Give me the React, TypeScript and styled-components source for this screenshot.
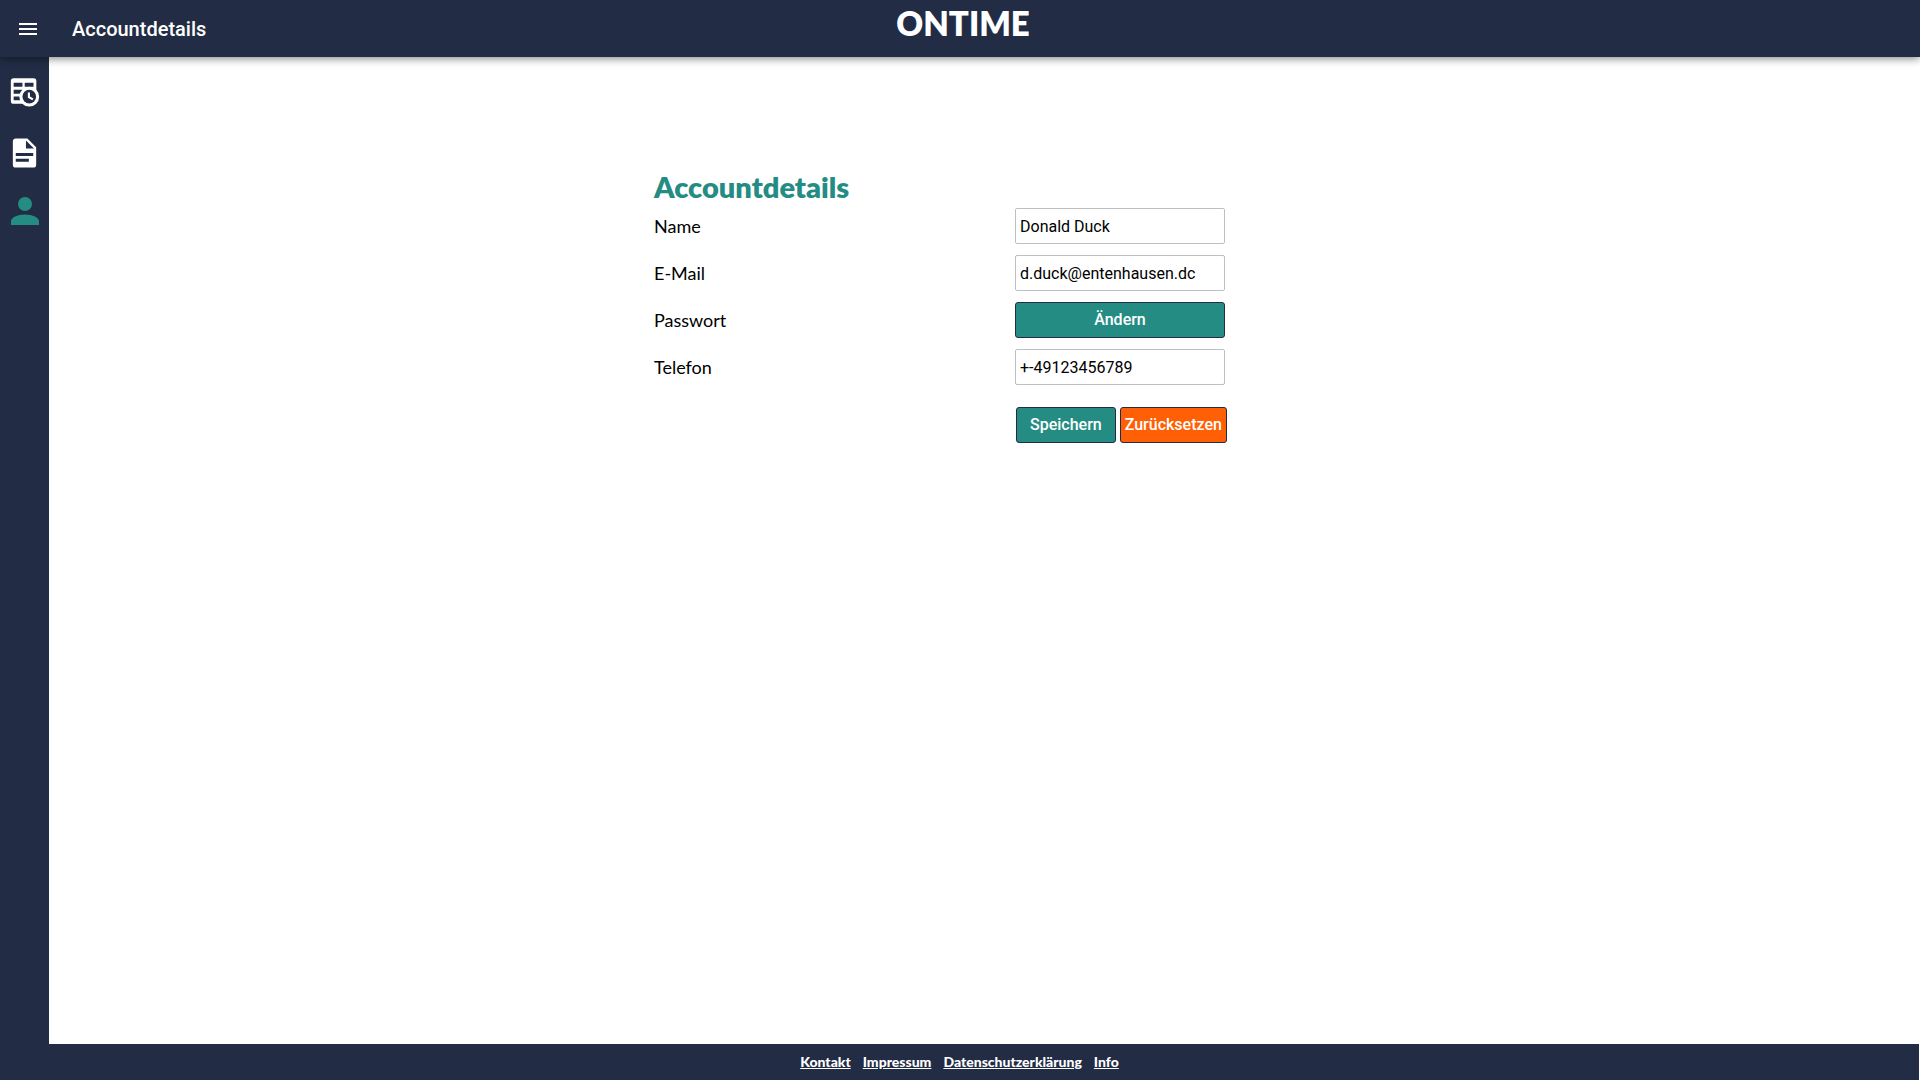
import React from "react";
import styled, { createGlobalStyle } from "styled-components";

const navy = "#222c45";
const teal = "#248c83";
const orange = "#ff5f05";

const GlobalStyle = createGlobalStyle`
  *, *::before, *::after { box-sizing: border-box; }
  body {
    margin: 0;
    background: #ffffff;
    color: #000000;
    font-family: Lato, "Liberation Sans", sans-serif;
  }
`;

const Page = styled.div`
  display: flex;
  flex-direction: column;
  min-height: 100vh;
`;

const TopBar = styled.header`
  position: relative;
  z-index: 1;
  display: grid;
  grid-template-columns: 1fr auto 1fr;
  height: 57px;
  padding: 0 10px 0 16px;
  background: ${navy};
  color: #ffffff;
  box-shadow: 0 2px 8px rgba(0, 0, 0, 0.45);
`;

const TopBarStart = styled.div`
  display: flex;
  align-items: center;
  gap: 32px;
`;

const MenuButton = styled.button`
  display: flex;
  padding: 0;
  border: 0;
  background: none;
  color: inherit;
  cursor: pointer;
`;

const PageTitle = styled.span`
  font: 500 20px/32px Roboto, sans-serif;
`;

const Brand = styled.span`
  font-size: 33px;
  font-weight: 800;
  line-height: 46px;
`;

const Body = styled.div`
  display: flex;
  flex: 1;
`;

const SideNav = styled.nav`
  display: flex;
  flex-direction: column;
  align-items: center;
  gap: 24px;
  width: 49px;
  padding-top: 16px;
  background: ${navy};
`;

const NavLink = styled.a<{ $active?: boolean }>`
  display: flex;
  align-items: center;
  justify-content: center;
  height: 36px;
  color: ${(p) => (p.$active ? teal : "#ffffff")};
`;

const Main = styled.main`
  display: flex;
  flex: 1;
  justify-content: center;
  padding: 112px 90px 32px 0;
`;

const AccountForm = styled.form`
  width: 571px;
`;

const Heading = styled.h1`
  margin: 0 0 3px;
  color: ${teal};
  font-size: 29px;
  font-weight: 800;
  line-height: 36px;
`;

const Fields = styled.div`
  display: flex;
  flex-direction: column;
  gap: 11px;
`;

const Field = styled.div`
  display: grid;
  grid-template-columns: 1fr 210px;
  align-items: center;
`;

const Label = styled.label`
  font-size: 18px;
  line-height: 24px;
`;

const TextInput = styled.input`
  width: 100%;
  height: 36px;
  padding: 0 4px;
  border: 1px solid #bfbfbf;
  border-radius: 2px;
  background: #ffffff;
  color: #000000;
  font: 400 16px/24px Roboto, sans-serif;
`;

const Button = styled.button<{ $danger?: boolean }>`
  height: 36px;
  padding: 0 4px;
  border: 1px solid ${navy};
  border-radius: 3px;
  background: ${(p) => (p.$danger ? orange : teal)};
  color: #ffffff;
  font: 500 16px/24px Roboto, sans-serif;
  cursor: pointer;
`;

const SaveButton = styled(Button)`
  padding: 0 13px;
`;

const Actions = styled.div`
  display: flex;
  gap: 4px;
  margin: 22px 0 0 362px;
`;

const Footer = styled.footer`
  display: flex;
  align-items: center;
  justify-content: center;
  gap: 12px;
  height: 36px;
  margin-right: 1px;
  background: ${navy};
`;

const FooterLink = styled.a`
  color: #ffffff;
  font-size: 14px;
  font-weight: 900;
  line-height: 20px;
  text-decoration: underline;
`;

interface IconProps {
  size: number;
  viewBox?: string;
  children: React.ReactNode;
}

function Icon({ size, viewBox = "0 0 24 24", children }: IconProps) {
  return (
    <svg width={size} height={size} viewBox={viewBox} fill="currentColor" aria-hidden="true">
      {children}
    </svg>
  );
}

function TableClockIcon() {
  return (
    <Icon size={34} viewBox="1 0 24 24">
      <rect x="3" y="3" width="18" height="18" rx="2" />
      <path
        fill={navy}
        d="M5 6.2h6.2V9H5zM12.8 6.2H19V9h-6.2zM5 11.1h6.2V14H5zM5 15.9h6.2v2.6H5z"
      />
      <circle cx="16" cy="16" r="7" />
      <circle cx="16" cy="16" r="4.8" fill={navy} />
      <path d="M15 13h1.5v2.82l2.44 1.41-.75 1.3L15 16.69z" />
    </Icon>
  );
}

const footerLinks = ["Kontakt", "Impressum", "Datenschutzerklärung", "Info"];

export default function App() {
  return (
    <Page>
      <GlobalStyle />
      <TopBar>
        <TopBarStart>
          <MenuButton type="button" aria-label="Menü">
            <Icon size={24}>
              <path d="M3 18h18v-2H3v2zm0-5h18v-2H3v2zm0-7v2h18V6H3z" />
            </Icon>
          </MenuButton>
          <PageTitle>Accountdetails</PageTitle>
        </TopBarStart>
        <Brand>ONTIME</Brand>
      </TopBar>
      <Body>
        <SideNav>
          <NavLink href="#zeiten" aria-label="Zeiten">
            <TableClockIcon />
          </NavLink>
          <NavLink href="#berichte" aria-label="Berichte">
            <Icon size={35} viewBox="0 -1 24 24">
              <path d="M13 9h5.5L13 3.5V9M6 2h8l6 6v12a2 2 0 0 1-2 2H6a2 2 0 0 1-2-2V4c0-1.11.89-2 2-2m9 16v-2H6v2h9m3-4v-2H6v2h12z" />
            </Icon>
          </NavLink>
          <NavLink href="#account" aria-label="Account" $active>
            <Icon size={42}>
              <path d="M12 4a4 4 0 0 1 4 4 4 4 0 0 1-4 4 4 4 0 0 1-4-4 4 4 0 0 1 4-4m0 10c4.42 0 8 1.79 8 4v2H4v-2c0-2.21 3.58-4 8-4z" />
            </Icon>
          </NavLink>
        </SideNav>
        <Main>
          <AccountForm onSubmit={(e) => e.preventDefault()}>
            <Heading>Accountdetails</Heading>
            <Fields>
              <Field>
                <Label htmlFor="name">Name</Label>
                <TextInput id="name" type="text" defaultValue="Donald Duck" />
              </Field>
              <Field>
                <Label htmlFor="email">E-Mail</Label>
                <TextInput id="email" type="email" defaultValue="d.duck@entenhausen.dc" />
              </Field>
              <Field>
                <Label htmlFor="password">Passwort</Label>
                <Button id="password" type="button">Ändern</Button>
              </Field>
              <Field>
                <Label htmlFor="phone">Telefon</Label>
                <TextInput id="phone" type="tel" defaultValue="+-49123456789" />
              </Field>
            </Fields>
            <Actions>
              <SaveButton type="submit">Speichern</SaveButton>
              <Button type="reset" $danger>Zurücksetzen</Button>
            </Actions>
          </AccountForm>
        </Main>
      </Body>
      <Footer>
        {footerLinks.map((text) => (
          <FooterLink key={text} href={"#" + text.toLowerCase()}>{text}</FooterLink>
        ))}
      </Footer>
    </Page>
  );
}
